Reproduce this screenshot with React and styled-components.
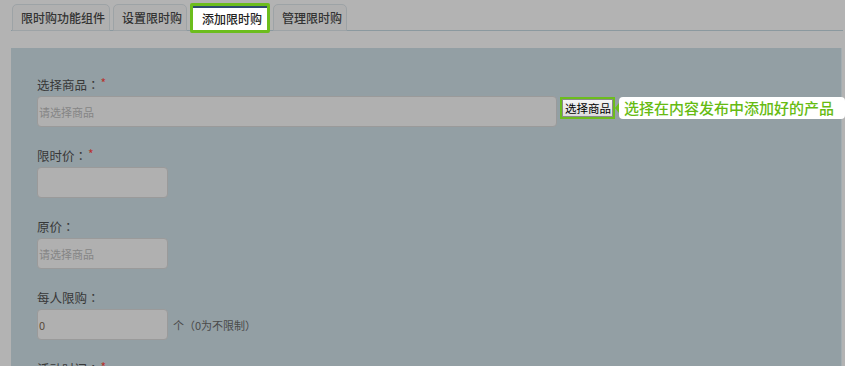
import React from "react";
import styled, { createGlobalStyle } from "styled-components";

const Global = createGlobalStyle`
  html, body { margin: 0; padding: 0; background: #b3b3b3; }
  body { font-family: "Noto Sans CJK SC", "Noto Sans", sans-serif; width: 845px; height: 366px; overflow: hidden; }
`;

const Page = styled.div`
  padding: 4px 2px 0 11px;
`;

const Tabs = styled.div`
  display: flex;
  gap: 3px;
  height: 26px;
  border-bottom: 1px solid #8b999f;
  padding-left: 1px;
`;

const Tab = styled.div`
  box-sizing: border-box;
  height: ${(p) => (p.$active ? "30px" : "27px")};
  padding: ${(p) => (p.$active ? "0 5px 0 9px" : "0 4px 0 8px")};
  border: ${(p) => (p.$active ? "3px solid #6cbd1d" : "1px solid #9da3a6")};
  border-radius: ${(p) => (p.$active ? "2px" : "5px 5px 0 0")};
  background: ${(p) => (p.$active ? "#ffffff" : "#b0b0b0")};
  box-shadow: ${(p) => (p.$active ? "inset 0 2px 0 #2d4c6d" : "none")};
  margin-top: ${(p) => (p.$active ? "-1px" : "0")};
  display: flex;
  align-items: center;
  font-size: 12px;
  font-weight: 500;
  color: ${(p) => (p.$active ? "#222" : "#333")};
  white-space: nowrap;
  position: relative;
  z-index: ${(p) => (p.$active ? 1 : 0)};
`;

const Panel = styled.div`
  margin-top: 17px;
  margin-right: 1px;
  background: #939fa4;
  border-right: 1px solid #a3adb1;
  height: 320px;
  padding: 29px 0 0 26px;
  box-sizing: border-box;
`;

const Field = styled.div`
  margin-bottom: 21px;
`;

const Label = styled.div`
  font-size: 12.5px;
  line-height: 16px;
  color: #383838;
  margin-bottom: 3px;
  height: 16px;
  white-space: nowrap;
`;

const Colon = styled.span`
  font-family: "Noto Sans CJK TC", sans-serif;
`;

const Star = styled.span`
  color: #b8322e;
  font-size: 12px;
  vertical-align: top;
  line-height: 12px;
  margin-left: 1px;
`;

const Row = styled.div`
  display: flex;
  align-items: center;
`;

const Input = styled.div`
  flex-shrink: 0;
  box-sizing: border-box;
  width: ${(p) => p.$w}px;
  height: 31px;
  border: 1px solid #9a9a9a;
  border-radius: 4px;
  background: #b0b0b0;
  font-size: 11px;
  color: ${(p) => (p.$value ? "#5b4a3a" : "#858585")};
  display: flex;
  align-items: center;
  padding-left: 1px;
`;

const PickBtn = styled.div`
  flex-shrink: 0;
  margin-left: 3px;
  box-sizing: border-box;
  height: 22px;
  border: 2px solid #6cbd1d;
  background: #fff;
  display: flex;
  align-items: center;
  align-self: flex-start;
  margin-top: 1px;
`;

const BtnFace = styled.div`
  height: 18px;
  padding: 0 1px 0 2px;
  background: linear-gradient(#f6f6f6, #dcdcdc);
  border: 1px solid #8a8a8a;
  box-sizing: border-box;
  font-size: 11.5px;
  line-height: 16px;
  color: #000;
  white-space: nowrap;
`;

const Callout = styled.div`
  flex-shrink: 0;
  position: relative;
  align-self: flex-start;
  margin-top: 1px;
  margin-left: 4px;
  height: 22px;
  width: 226px;
  box-sizing: border-box;
  background: #fff;
  border-radius: 4px;
  font-size: 15px;
  font-weight: 500;
  line-height: 22px;
  color: #66bb12;
  padding-left: 5px;
  white-space: nowrap;
  &::before {
    content: "";
    position: absolute;
    left: -4px;
    top: 6px;
    border-style: solid;
    border-width: 5px 4px 5px 0;
    border-color: transparent #6cbd1d transparent transparent;
  }
`;

const Hint = styled.span`
  margin-left: 5px;
  font-family: "Noto Sans CJK TC", sans-serif;
  font-size: 11px;
  color: #4a4a4a;
  white-space: nowrap;
`;

export default function App() {
  return (
    <>
      <Global />
      <Page>
        <Tabs>
          <Tab>限时购功能组件</Tab>
          <Tab>设置限时购</Tab>
          <Tab $active>添加限时购</Tab>
          <Tab>管理限时购</Tab>
        </Tabs>
        <Panel>
          <Field>
            <Label>
              选择商品<Colon>：</Colon><Star>*</Star>
            </Label>
            <Row>
              <Input $w={520}>请选择商品</Input>
              <PickBtn>
                <BtnFace>选择商品</BtnFace>
              </PickBtn>
              <Callout>选择在内容发布中添加好的产品</Callout>
            </Row>
          </Field>
          <Field>
            <Label>
              限时价<Colon>：</Colon><Star>*</Star>
            </Label>
            <Input $w={131} />
          </Field>
          <Field>
            <Label>原价<Colon>：</Colon></Label>
            <Input $w={131}>请选择商品</Input>
          </Field>
          <Field>
            <Label>每人限购<Colon>：</Colon></Label>
            <Row>
              <Input $w={131} $value>0</Input>
              <Hint>个（0为不限制）</Hint>
            </Row>
          </Field>
          <Field>
            <Label>
              活动时间<Colon>：</Colon><Star>*</Star>
            </Label>
          </Field>
        </Panel>
      </Page>
    </>
  );
}
